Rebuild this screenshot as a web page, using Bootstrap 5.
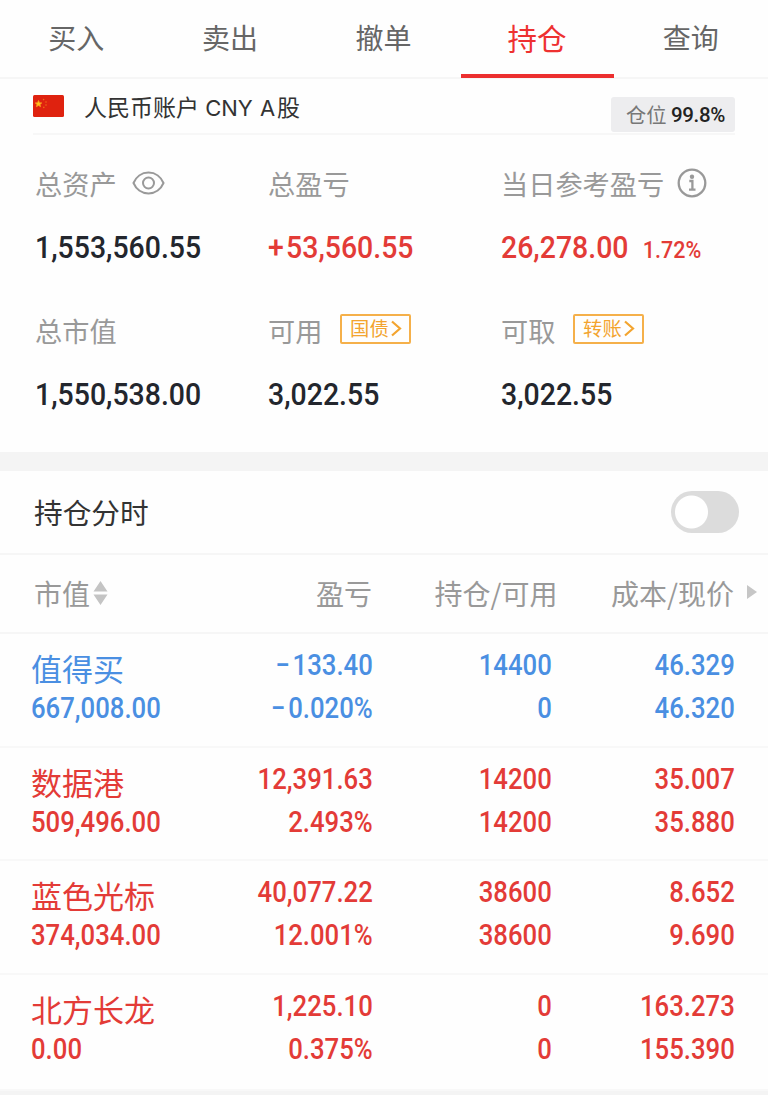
<!DOCTYPE html>
<html lang="zh-CN">
<head>
<meta charset="utf-8">
<meta name="viewport" content="width=device-width, initial-scale=1">
<title>持仓</title>
<link rel="stylesheet" href="https://cdn.jsdelivr.net/npm/bootstrap@5.3.0/dist/css/bootstrap.min.css">
<style>
body{background:#fefefe;color:#23262d;font-family:"Noto Sans CJK SC",sans-serif;overflow:hidden}
.num{font-family:Roboto,sans-serif;font-weight:500;white-space:nowrap}
.up{color:#e33b37}.down{color:#4a8fe2}
.tabs{height:79px;border-bottom:2px solid #f6f6f6}
.tabs .nav-link{height:78px;padding:0 1px 0 0;line-height:75px;font-size:28px;color:#666;border-radius:0}
.tabs .nav-link.active{color:#ee3131;font-size:29.5px;font-weight:400;border-bottom:4px solid #ec2f2f}
.account{height:56px;margin:0 33px;border-bottom:2px solid #f7f7f7;color:#333}
.acc-name{font-size:23px;line-height:54px;margin-left:20px;white-space:nowrap}
.acc-name span{font-family:Inter,sans-serif;font-size:22px;margin:0 2px 0 1px;word-spacing:1px}
.flag{width:31px;height:22px;margin-top:-2px}
.position-chip{width:124px;height:35px;margin-top:18px;background:#ededef;border-radius:3px;font-size:20.3px;color:#777;padding:0 10px 0 15px;line-height:34px}
.position-chip .num{font-size:20.5px;color:#222;letter-spacing:-.35px;line-height:36px}
.summary{height:317px;padding:20px 0 0 35px}
.stat{width:233px;height:147px}
.stat-label{height:56px;font-size:27.2px;color:#999;line-height:55px;white-space:nowrap}
.stat-label svg{margin-top:-1px}
.stat-value{font-size:31.8px;line-height:73px;transform:scaleX(.895);transform-origin:0 50%}
.stat-value small{font-size:24px;margin-left:16px}
.plus{letter-spacing:2.5px}
.tag{border:2px solid #f5b04a;border-radius:2px;color:#f3a42f;font-size:19.3px;height:30px;width:71px;line-height:25px;margin:-3px 0 0 18px}
.tag svg{margin-top:0}
.band{height:19px;background:#f4f4f4}
.intraday{height:84px;padding:0 29px 0 34px;border-bottom:2px solid #f6f6f6;font-size:28.7px;color:#333;line-height:84px}
.form-switch .form-check-input.toggle{width:68px;height:42px;margin:0;float:none;border:0;background-color:#dcdcdc;border-radius:21px;
 background-image:radial-gradient(circle 16.5px at 20.5px 21px,#fff 16px,transparent 17px)}
.cols{display:grid;grid-template-columns:160px 181px 179px 183px 34px;padding-left:31px}
.cols>*{text-align:right}
.cols>:first-child{text-align:left}
.heads{height:79px;border-bottom:2px solid #f6f6f6;color:#999;font-size:28px;line-height:77px;white-space:nowrap}
.heads>:first-child{padding-left:3px;line-height:75px}
.heads>:nth-child(3){margin-right:-6.5px}
.holding{height:113.6px;padding-top:10px;border-bottom:2px solid #f8f8f8;font-size:28.8px;line-height:43px}
.holding:last-child{height:116px}
.holding .num>div{transform:scaleX(.893);transform-origin:100% 50%;margin-right:-.8px}
.holding .num:first-child>div{transform-origin:0 50%}
.minus{letter-spacing:3px}
.holding .num>.stock{font-family:"Noto Sans CJK SC",sans-serif;font-weight:400;font-size:31px;line-height:47px;height:43px;transform:none}
</style>
</head>
<body>
<nav class="nav nav-fill nav-justified tabs flex-nowrap">
<a class="nav-link">买入</a><a class="nav-link">卖出</a><a class="nav-link">撤单</a><a class="nav-link active">持仓</a><a class="nav-link">查询</a>
</nav>
<section class="account d-flex align-items-start">
<div class="d-flex align-items-center">
<svg class="flag" viewBox="0 0 31 22"><rect width="31" height="22" rx="1.5" fill="#df220f"/><path d="M5.500 5.500l1 2.200 2.300.2-1.800 1.500.6 2.300-2.100-1.200-2.100 1.200.6-2.300-1.800-1.500 2.300-.2z" fill="#ffc21a" stroke="#f7941d" stroke-width=".8"/><g fill="#ee6a16"><circle cx="10.600" cy="4.600" r=".8"/><circle cx="13" cy="7" r=".8"/><circle cx="13" cy="10" r=".8"/><circle cx="10.800" cy="12.400" r=".8"/></g></svg>
<div class="acc-name">人民币账户 <span>CNY A</span>股</div>
</div>
<div class="position-chip ms-auto d-flex justify-content-between text-nowrap"><div>仓位</div><div class="num">99.8%</div></div>
</section>
<section class="summary d-flex flex-wrap align-content-start">
<div class="stat"><div class="stat-label d-flex align-items-center">总资产<svg style="margin-left:15px" width="33" height="24" viewBox="0 0 33 24" fill="none" stroke="#999" stroke-width="2"><path d="M1.500 12C4 6 9.500 1.500 16.500 1.500S29 6 31.500 12C29 18 23.500 22.500 16.500 22.500S4 18 1.500 12z"/><circle cx="16.500" cy="12" r="5.500"/></svg></div><div class="stat-value num">1,553,560.55</div></div>
<div class="stat"><div class="stat-label d-flex align-items-center">总盈亏</div><div class="stat-value num up"><span class="plus">+</span>53,560.55</div></div>
<div class="stat"><div class="stat-label d-flex align-items-center">当日参考盈亏<svg style="margin-left:13px" width="30" height="30" viewBox="0 0 30 30" fill="none" stroke="#999" stroke-width="2.300"><circle cx="15" cy="15" r="13.300"/><path d="M12.300 13H15.400V21.500M12 21.700H18.500"/><circle cx="15" cy="8.800" r="2.200" fill="#999" stroke="none"/></svg></div><div class="stat-value num up">26,278.00<small>1.72%</small></div></div>
<div class="stat"><div class="stat-label d-flex align-items-center">总市值</div><div class="stat-value num">1,550,538.00</div></div>
<div class="stat"><div class="stat-label d-flex align-items-center">可用<div class="tag d-flex align-items-center justify-content-center">国债<svg width="13" height="17" viewBox="0 0 13 17" fill="none" stroke="currentColor" stroke-width="2.200"><path d="M3 1.500l8 7-8 7"/></svg></div></div><div class="stat-value num">3,022.55</div></div>
<div class="stat"><div class="stat-label d-flex align-items-center">可取<div class="tag d-flex align-items-center justify-content-center">转账<svg width="13" height="17" viewBox="0 0 13 17" fill="none" stroke="currentColor" stroke-width="2.200"><path d="M3 1.500l8 7-8 7"/></svg></div></div><div class="stat-value num">3,022.55</div></div>
</section>
<div class="band"></div>
<section class="intraday d-flex justify-content-between align-items-center"><span>持仓分时</span><div class="form-switch d-flex p-0"><input class="form-check-input toggle" type="checkbox" role="switch" aria-label="持仓分时"></div></section>
<section>
<div class="cols heads">
<div class="d-flex align-items-center">市值<svg style="margin:-2px 0 0 3px" width="15" height="24" viewBox="0 0 15 24" fill="#c4c4c4"><path d="M7.500 0l7 10.500H.5zM7.500 24l7-10.500H.5z"/></svg></div>
<div>盈亏</div><div>持仓/可用</div><div>成本/现价</div>
<div class="d-flex align-items-center"><svg style="margin:-4px 0 0 13px" width="10" height="14" viewBox="0 0 10 14" fill="#c6c6c6"><path d="M0 0l10 7-10 7z"/></svg></div>
</div>
<div class="cols holding down"><div class="num"><div class="stock">值得买</div><div>667,008.00</div></div><div class="num"><div><span class="minus">−</span>133.40</div><div><span class="minus">−</span>0.020%</div></div><div class="num"><div>14400</div><div>0</div></div><div class="num"><div>46.329</div><div>46.320</div></div></div>
<div class="cols holding up"><div class="num"><div class="stock">数据港</div><div>509,496.00</div></div><div class="num"><div>12,391.63</div><div>2.493%</div></div><div class="num"><div>14200</div><div>14200</div></div><div class="num"><div>35.007</div><div>35.880</div></div></div>
<div class="cols holding up"><div class="num"><div class="stock">蓝色光标</div><div>374,034.00</div></div><div class="num"><div>40,077.22</div><div>12.001%</div></div><div class="num"><div>38600</div><div>38600</div></div><div class="num"><div>8.652</div><div>9.690</div></div></div>
<div class="cols holding up"><div class="num"><div class="stock">北方长龙</div><div>0.00</div></div><div class="num"><div>1,225.10</div><div>0.375%</div></div><div class="num"><div>0</div><div>0</div></div><div class="num"><div>163.273</div><div>155.390</div></div></div>
</section>
<div class="band"></div>
<script src="https://cdn.jsdelivr.net/npm/bootstrap@5.3.0/dist/js/bootstrap.bundle.min.js"></script>
</body>
</html>
